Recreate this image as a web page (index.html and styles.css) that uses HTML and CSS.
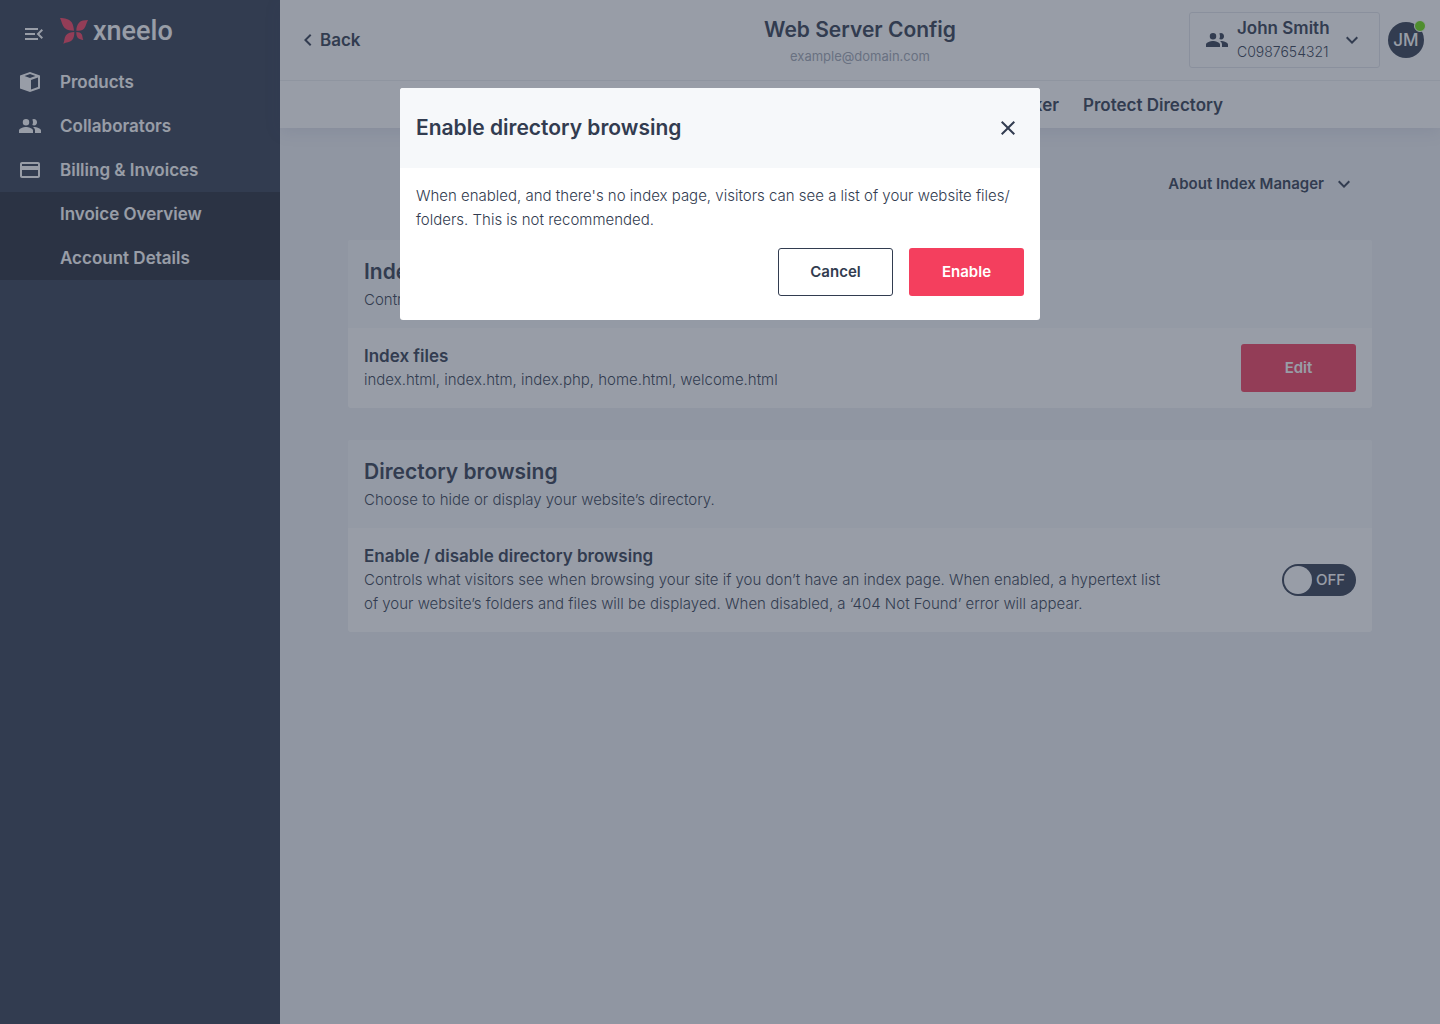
FILE: index.html
```html
<!DOCTYPE html>
<html lang="en">
<head>
<meta charset="utf-8">
<meta name="viewport" content="width=device-width, initial-scale=1">
<title>Web Server Config</title>
<link rel="stylesheet" href="styles.css">
</head>
<body>
<div class="app">
  <aside class="sidebar">
    <div class="brand">
      <button class="icon-button" type="button" aria-label="Collapse menu">
        <svg class="icon" viewBox="0 0 24 24"><path d="M3 18h13v-2H3v2zm0-5h10v-2H3v2zm0-7v2h13V6H3zm18 9.590L17.420 12 21 8.410 19.590 7l-5 5 5 5L21 15.590z"/></svg>
      </button>
      <a class="logo" href="#">
        <svg class="logo-mark" viewBox="0 0 84 78"><path d="M0 0C14 0 28 3 35 13C40 21 41 30 42 38C32 38 22 37 14 30C6 22 5 10 0 0Z"/><path d="M84 6C79 14 78 25 72 32C66 38 58 38 49 38C49 29 51 21 57 14C63 7 74 7 84 6Z"/><path d="M10 77C14 69 12 60 18 52C24 44 33 43 43 42C43 51 42 60 36 67C29 74 19 73 10 77Z"/><path d="M49 42C57 42 62 44 65 49C68 54 67 60 70 66C64 64 58 64 53 59C49 54 49 48 49 42Z"/></svg>
        <span class="logo-name">xneelo</span>
      </a>
    </div>
    <nav class="side-nav" aria-label="Main">
      <a class="side-link" href="#">
        <svg class="icon" viewBox="0 0 24 24"><path fill-rule="evenodd" d="M12 2L22 5.500V18.500L12 22L2 18.500V5.500ZM12 4L6.500 6L12 8L17.500 6ZM13 10V19.600L20 17.100V7.500Z"/></svg>
        Products
      </a>
      <a class="side-link" href="#">
        <svg class="icon" viewBox="0 0 24 24"><path d="M8 11.500a3.200 3.200 0 1 0 0-6.500 3.200 3.200 0 0 0 0 6.500zm8 0a3.200 3.200 0 1 0-1.700-6c.9 1.600.9 3.900 0 5.500.5.300 1.100.5 1.700.5zM8 13c-2.300 0-7 1.200-7 3.500V19h14v-2.500C15 14.200 10.300 13 8 13zm8 0h-1c1.200.8 2 2 2 3.500V19h6v-2.500C23 14.200 18.300 13 16 13z"/></svg>
        Collaborators
      </a>
      <a class="side-link" href="#">
        <svg class="icon" viewBox="0 0 24 24"><path d="M20 4H4c-1.100 0-2 .9-2 2v12c0 1.100.9 2 2 2h16c1.100 0 2-.9 2-2V6c0-1.100-.9-2-2-2zm0 14H4v-6h16v6zm0-10H4V6h16v2z"/></svg>
        Billing &amp; Invoices
      </a>
      <div class="sub-nav">
        <a class="sub-link" href="#">Invoice Overview</a>
        <a class="sub-link" href="#">Account Details</a>
      </div>
    </nav>
  </aside>

  <div class="page">
    <header class="header">
      <div class="topbar">
        <a class="back" href="#">
          <svg class="icon" viewBox="0 0 24 24"><path d="M15.410 7.410L14 6l-6 6 6 6 1.410-1.410L10.830 12z"/></svg>Back
        </a>
        <div class="heading">
          <h1 class="title">Web Server Config</h1>
          <p class="domain">example@domain.com</p>
        </div>
        <div class="user">
          <button class="account" type="button">
            <svg class="icon" viewBox="0 0 24 24"><path d="M8 11.500a3.200 3.200 0 1 0 0-6.500 3.200 3.200 0 0 0 0 6.500zm8 0a3.200 3.200 0 1 0-1.700-6c.9 1.600.9 3.900 0 5.500.5.300 1.100.5 1.700.5zM8 13c-2.300 0-7 1.200-7 3.500V19h14v-2.500C15 14.200 10.300 13 8 13zm8 0h-1c1.200.8 2 2 2 3.500V19h6v-2.500C23 14.200 18.300 13 16 13z"/></svg>
            <span class="account-text"><span class="account-name">John Smith</span><span class="account-id">C0987654321</span></span>
            <svg class="icon" viewBox="0 0 24 24"><path d="M16.590 8.590L12 13.170 7.410 8.590 6 10l6 6 6-6z"/></svg>
          </button>
          <button class="avatar" type="button">JM<span class="status"></span></button>
        </div>
      </div>
      <nav class="tabs" aria-label="Sections">
        <a class="tab" href="#">IP Blocker</a>
        <a class="tab" href="#">Protect Directory</a>
      </nav>
    </header>

    <main class="content">
      <button class="about" type="button">About Index Manager
        <svg class="icon" viewBox="0 0 24 24"><path d="M16.590 8.590L12 13.170 7.410 8.590 6 10l6 6 6-6z"/></svg>
      </button>

      <section class="card">
        <div class="card-header">
          <h2 class="card-title">Index Manager</h2>
          <p class="text">Control which page visitors see first.</p>
        </div>
        <div class="card-body">
          <div class="setting">
            <h3 class="setting-title">Index files</h3>
            <p class="text">index.html, index.htm, index.php, home.html, welcome.html</p>
          </div>
          <button class="button button-primary" type="button">Edit</button>
        </div>
      </section>

      <section class="card">
        <div class="card-header">
          <h2 class="card-title">Directory browsing</h2>
          <p class="text">Choose to hide or display your website’s directory.</p>
        </div>
        <div class="card-body">
          <div class="setting">
            <h3 class="setting-title" id="browsing">Enable / disable directory browsing</h3>
            <p class="text">Controls what visitors see when browsing your site if you don’t have an index page. When enabled, a hypertext list<br>of your website’s folders and files will be displayed. When disabled, a ‘404 Not Found’ error will appear.</p>
          </div>
          <label class="switch"><input class="switch-knob" type="checkbox" aria-labelledby="browsing">OFF</label>
        </div>
      </section>
    </main>
  </div>
</div>

<div class="backdrop">
  <div class="dialog" role="dialog" aria-modal="true" aria-labelledby="dialog-title">
    <div class="dialog-header">
      <h2 class="card-title" id="dialog-title">Enable directory browsing</h2>
      <button class="icon-button close" type="button" aria-label="Close">
        <svg class="icon" viewBox="0 0 24 24"><path d="M19 6.410L17.590 5 12 10.590 6.410 5 5 6.410 10.590 12 5 17.590 6.410 19 12 13.410 17.590 19 19 17.590 13.410 12z"/></svg>
      </button>
    </div>
    <div class="dialog-body">
      <p class="text">When enabled, and there's no index page, visitors can see a list of your website files/<br>folders. This is not recommended.</p>
      <div class="actions">
        <button class="button button-outline" type="button">Cancel</button>
        <button class="button button-primary" type="button">Enable</button>
      </div>
    </div>
  </div>
</div>
</body>
</html>
```
FILE: styles.css
```css
:root {
  --ink: #323c50;
  --red: #f43f5e;
  --panel: #f6f8fa;
}

* { box-sizing: border-box; }

body {
  margin: 0;
  color: var(--ink);
  background: #eef0f4;
  font: 400 15px/24px Inter, "Liberation Sans", sans-serif;
}

h1, h2, h3, p { margin: 0; font-weight: 600; }
a { color: inherit; text-decoration: none; }
button { margin: 0; padding: 0; border: 0; background: none; color: inherit; font: inherit; cursor: pointer; }

.icon { display: block; flex: none; width: 24px; height: 24px; fill: currentColor; }
.icon-button { display: flex; }
.text { font-weight: 300; }

.app { display: grid; grid-template-columns: 280px minmax(0, 1fr); min-height: 100vh; }

/* Sidebar */
.sidebar { background: var(--ink); color: #fff; font-size: 17px; font-weight: 600; }
.brand { display: flex; align-items: center; gap: 14px; height: 60px; padding: 8px 22px 0; }
.logo { display: flex; align-items: center; gap: 5px; padding-bottom: 6px; }
.logo-mark { width: 28px; height: 26px; fill: var(--red); }
.logo-name { font: 500 27px/32px Roboto, sans-serif; }
.side-link { display: flex; align-items: center; gap: 18px; height: 44px; padding-left: 18px; }
.sub-nav { background: #242a38; }
.sub-link { display: flex; align-items: center; height: 44px; padding-left: 60px; }

/* Header */
.header { background: #fff; box-shadow: 0 4px 16px rgba(50, 60, 130, 0.1); }
.topbar {
  display: grid;
  grid-template-columns: 1fr auto 1fr;
  align-items: center;
  height: 81px;
  padding: 0 16px;
  border-bottom: 1px solid #eceef1;
}
.back { display: flex; align-items: center; justify-self: start; font-size: 17px; font-weight: 600; }
.heading { align-self: start; padding-top: 12px; text-align: center; }
.title { font-size: 21px; line-height: 36px; }
.domain { color: #a0a6b2; font-size: 13px; font-weight: 400; line-height: 16px; }
.user { display: flex; align-items: center; justify-self: end; gap: 8px; }
.account {
  display: flex;
  align-items: center;
  gap: 8px;
  height: 56px;
  padding: 0 15px;
  border: 1px solid #e2e5ea;
  border-radius: 3px;
  text-align: left;
}
.account-text { display: grid; min-width: 95px; }
.account-name { font-size: 17px; font-weight: 600; }
.account-id { font-size: 14px; font-weight: 300; }
.avatar {
  position: relative;
  width: 36px;
  height: 36px;
  border-radius: 50%;
  background: var(--ink);
  color: #fff;
  font-size: 17px;
  font-weight: 500;
}
.status {
  position: absolute;
  top: -2px;
  right: -2px;
  width: 12px;
  height: 12px;
  border: 1px solid #fff;
  border-radius: 50%;
  background: #6ce00c;
}
.tabs {
  display: flex;
  align-items: center;
  justify-content: flex-end;
  gap: 24px;
  max-width: 726px;
  height: 47px;
  margin: 0 auto;
  font-size: 17px;
  font-weight: 600;
}

/* Content */
.content { display: grid; gap: 32px; max-width: 1024px; margin: 0 auto; padding: 32px 0; }
.about {
  display: flex;
  align-items: center;
  justify-self: end;
  gap: 8px;
  height: 48px;
  padding-right: 16px;
  font-weight: 600;
}
.card { border-radius: 3px; background: #fff; overflow: hidden; }
.card-header { padding: 16px; background: var(--panel); }
.card-title { font-size: 21px; line-height: 32px; }
.card-body { display: flex; align-items: center; justify-content: space-between; gap: 16px; padding: 16px; }
.setting-title { font-size: 17px; }

.button { min-width: 115px; height: 48px; padding: 0 24px; border-radius: 3px; font-weight: 600; }
.button-primary { background: var(--red); color: #fff; }
.button-outline { border: 1px solid var(--ink); }

.switch {
  display: flex;
  align-items: center;
  gap: 4px;
  flex: none;
  width: 74px;
  height: 32px;
  padding: 2px;
  border-radius: 16px;
  background: var(--ink);
  color: #fff;
  font-weight: 500;
}
.switch-knob { appearance: none; width: 28px; height: 28px; margin: 0; border-radius: 50%; background: #fff; }

/* Dialog */
.backdrop {
  position: fixed;
  inset: 0;
  display: flex;
  align-items: flex-start;
  justify-content: center;
  padding: 88px 16px 16px;
  background: rgba(50, 60, 80, 0.5);
}
.dialog { width: 100%; max-width: 640px; border-radius: 3px; background: #fff; overflow: hidden; }
.dialog-header {
  display: flex;
  align-items: center;
  justify-content: space-between;
  height: 80px;
  padding: 0 20px 0 16px;
  background: var(--panel);
}
.dialog-body { padding: 16px 16px 24px; }
.actions { display: flex; justify-content: flex-end; gap: 16px; margin-top: 16px; }
```
